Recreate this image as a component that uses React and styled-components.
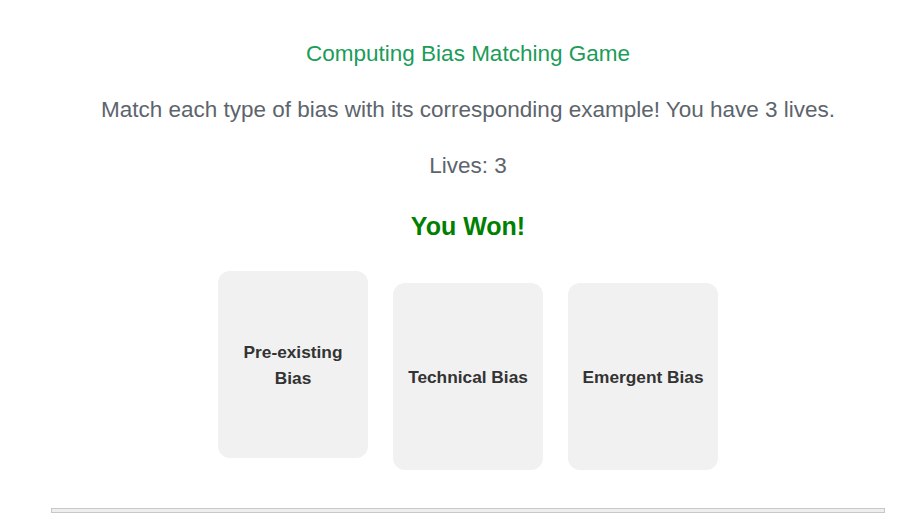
import React from 'react';
import styled, { createGlobalStyle } from 'styled-components';

const GlobalStyle = createGlobalStyle`
  body {
    margin: 0;
    background: #ffffff;
    font-family: "Liberation Sans", Arial, sans-serif;
  }
`;

const Page = styled.div`
  width: 902px;
  height: 532px;
  box-sizing: border-box;
  padding: 41px 0 0 34px;
  display: flex;
  flex-direction: column;
  align-items: center;
  overflow: hidden;
`;

const Title = styled.h1`
  margin: 0;
  font-size: 22.5px;
  font-weight: normal;
  line-height: 25px;
  color: #1b9c58;
`;

const Line = styled.p`
  margin: ${p => p.$top}px 0 0;
  font-size: 22.5px;
  line-height: 25px;
  color: #5d646c;
`;

const Result = styled.h2`
  margin: 34px 0 0;
  font-size: 25px;
  line-height: 28px;
  font-weight: bold;
  color: #008000;
`;

const Cards = styled.div`
  display: flex;
  gap: 25px;
  margin-top: 43px;
`;

const Card = styled.div`
  width: 150px;
  height: 187px;
  box-sizing: border-box;
  padding: 0 12px;
  border-radius: 12px;
  background: #f1f1f1;
  display: flex;
  align-items: center;
  justify-content: center;
  text-align: center;
  font-size: 17.3px;
  line-height: 26px;
  font-weight: bold;
  color: #333333;
  transform: ${p => (p.$raised ? 'translateY(-12px)' : 'none')};
`;

const Track = styled.div`
  width: 834px;
  height: 5px;
  box-sizing: border-box;
  margin-top: 38px;
  border: 1px solid #c8c8c8;
  background: #eeeeee;
`;

const biases = ['Pre-existing Bias', 'Technical Bias', 'Emergent Bias'];

export default function App() {
  return (
    <>
      <GlobalStyle />
      <Page>
        <Title>Computing Bias Matching Game</Title>
        <Line $top={31}>Match each type of bias with its corresponding example! You have 3 lives.</Line>
        <Line $top={31}>Lives: 3</Line>
        <Result>You Won!</Result>
        <Cards>
          {biases.map((b, i) => (
            <Card key={b} $raised={i === 0}>{b}</Card>
          ))}
        </Cards>
        <Track />
      </Page>
    </>
  );
}
